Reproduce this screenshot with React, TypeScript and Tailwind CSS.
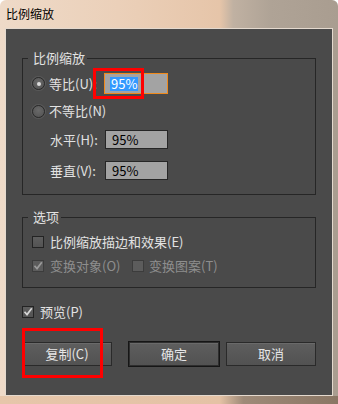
import React from "react";

function Radio({ checked }: { checked?: boolean }) {
  return (
    <span className="w-[13px] h-[13px] rounded-full border border-[#2a2a2a] bg-[radial-gradient(circle_at_50%_40%,#6a6a6a,#505050)] shadow-[0_0_0_1px_#5a5a5a] flex items-center justify-center shrink-0">
      {checked && <span className="w-[4px] h-[4px] rounded-full bg-[#dcdcdc]" />}
    </span>
  );
}

function Check({ checked, disabled }: { checked?: boolean; disabled?: boolean }) {
  return (
    <span
      className={
        disabled
          ? "w-[12px] h-[12px] border border-[#3c3c3c] bg-[#5c5c5c] flex items-center justify-center shrink-0"
          : "w-[12px] h-[12px] border border-[#232323] bg-[linear-gradient(#5e5e5e,#535353)] flex items-center justify-center shrink-0"
      }
    >
      {checked && (
        <svg width="10" height="10" viewBox="0 0 10 10">
          <path
            d="M1.5 4.8 L4 7.6 L8.8 1.2"
            stroke={disabled ? "#9a9a9a" : "#d6d6d6"}
            strokeWidth="1.7"
            fill="none"
          />
        </svg>
      )}
    </span>
  );
}

export default function App() {
  return (
    <div className="relative w-[338px] h-[404px] flex flex-col overflow-hidden rounded-t-[6px] bg-[linear-gradient(90deg,#eedac8_0%,#ebd0b9_35%,#e6c5a9_65%,#c0b1a2_69%,#afa396_80%,#a99d90_100%)] font-['Noto_Sans_CJK_SC',sans-serif]">
      <div className="h-[28px] flex items-center pl-[6px] text-[12px] leading-none text-black">比例缩放</div>
      <div className="mx-[5px] h-[368px] border border-[#e4d9ce] bg-[#4a4a4a] flex flex-col text-[13px] leading-[16px] text-[#e2e2e2]">
        <fieldset className="mt-[21px] ml-[16px] w-[294px] border border-[#262626] pb-[14px]">
          <legend className="ml-[5px] pl-[5px] pr-[2px] leading-[16px]">比例缩放</legend>
          <div className="mt-[7px] h-[21px] flex items-center pl-[9px]">
            <Radio checked />
            <span className="ml-[4px] w-[55px]">等比(U):</span>
            <div className="w-[64px] h-[21px] border border-[#f08a1c] bg-[#a3a3a3] flex items-center pl-[5px]">
              <span className="bg-[#3399ff] text-white px-[1px] leading-[14px] text-[13px]">95%</span>
            </div>
          </div>
          <div className="mt-[9px] h-[16px] flex items-center pl-[9px]">
            <Radio />
            <span className="ml-[4px]">不等比(N)</span>
          </div>
          <div className="mt-[11px] h-[19px] flex items-center pl-[27px]">
            <span className="w-[55px]">水平(H):</span>
            <div className="w-[63px] h-[19px] border border-[#262626] bg-[#a3a3a3] flex items-center pl-[6px] text-black">95%</div>
          </div>
          <div className="mt-[12px] h-[19px] flex items-center pl-[27px]">
            <span className="w-[55px]">垂直(V):</span>
            <div className="w-[63px] h-[19px] border border-[#262626] bg-[#a3a3a3] flex items-center pl-[6px] text-black">95%</div>
          </div>
        </fieldset>

        <fieldset className="mt-[14px] ml-[16px] w-[294px] border border-[#262626] pb-[13px]">
          <legend className="ml-[5px] pl-[5px] pr-[2px] leading-[16px]">选项</legend>
          <div className="mt-[9px] h-[16px] flex items-center pl-[9px]">
            <Check />
            <span className="ml-[6px]">比例缩放描边和效果(E)</span>
          </div>
          <div className="mt-[8px] h-[16px] flex items-center pl-[9px] text-[#8e8e8e]">
            <div className="w-[100px] flex items-center">
              <Check checked disabled />
              <span className="ml-[6px]">变换对象(O)</span>
            </div>
            <Check disabled />
            <span className="ml-[5px]">变换图案(T)</span>
          </div>
        </fieldset>

        <div className="mt-[16px] ml-[16px] h-[16px] flex items-center">
          <Check checked />
          <span className="ml-[6px]">预览(P)</span>
        </div>

        <div className="mt-[21px] ml-[16px] h-[26px] flex items-center">
          <button className="w-[90px] h-[24px] border border-[#2a2a2a] bg-[linear-gradient(#5e5e5e,#525252)] shadow-[inset_0_1px_0_#6a6a6a] text-[13px] text-[#e6e6e6]">复制(C)</button>
          <div className="ml-[16px] w-[92px] h-[26px] border border-[#161616]">
            <button className="w-full h-full border border-[#2e2e2e] bg-[linear-gradient(#5e5e5e,#525252)] shadow-[inset_0_1px_0_#6a6a6a] text-[13px] text-[#e6e6e6]">确定</button>
          </div>
          <button className="ml-[6px] w-[90px] h-[24px] border border-[#2a2a2a] bg-[linear-gradient(#5e5e5e,#525252)] shadow-[inset_0_1px_0_#6a6a6a] text-[13px] text-[#e6e6e6]">取消</button>
        </div>
      </div>
      <div className="flex-1 bg-[linear-gradient(90deg,#e6c6aa_0%,#e4c2a5_65%,#9e8a78_72%,#8a7664_100%)]" />

      <div className="absolute left-[93px] top-[68px] w-[51px] h-[31px] border-[3px] border-[#ff0000]" />
      <div className="absolute left-[22px] top-[328px] w-[81px] h-[50px] border-[3px] border-[#ff0000]" />
    </div>
  );
}
